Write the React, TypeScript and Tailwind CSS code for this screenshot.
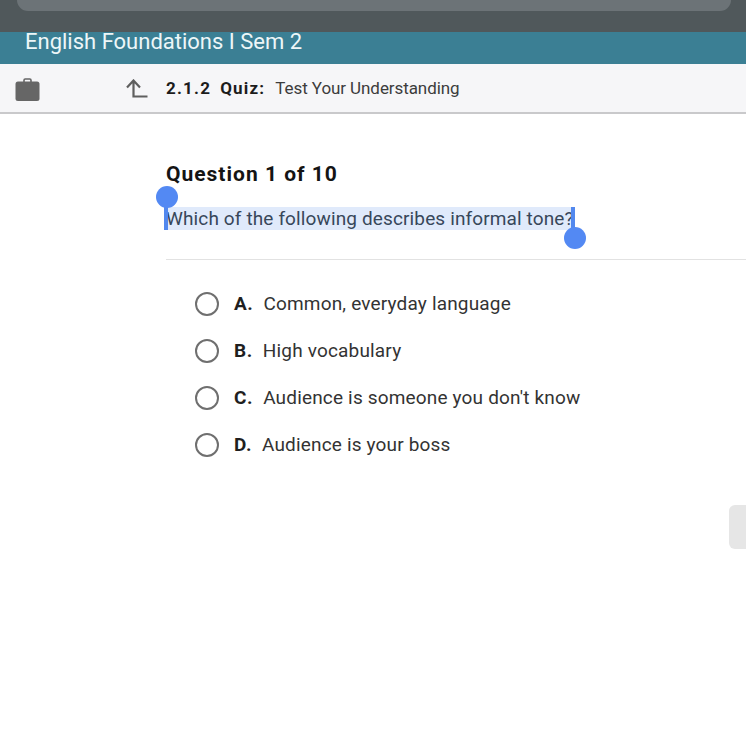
import React from "react";

const options = [
  { letter: "A.", text: "Common, everyday language" },
  { letter: "B.", text: "High vocabulary" },
  { letter: "C.", text: "Audience is someone you don't know" },
  { letter: "D.", text: "Audience is your boss" },
];

export default function App() {
  return (
    <div className="relative h-[750px] w-[746px] overflow-hidden bg-white font-['Roboto',sans-serif]">
      {/* browser chrome */}
      <div className="h-8 bg-[#50585b] pl-[17px] pr-[15px]">
        <div className="h-[11px] rounded-b-[12px] bg-[#6c7377]" />
      </div>

      <div className="flex h-8 items-start bg-[#3b7f94] pl-[25px]">
        <span className="text-[22px] leading-[20px] text-[#edf6f8]">English Foundations I Sem 2</span>
      </div>

      <div className="flex h-[50px] items-center border-b-2 border-[#c9c9cb] bg-[#f6f6f8] pl-[15px] pt-[2px]">
        <svg width="25" height="25" viewBox="0 0 25 25">
          <path d="M9 5V3.200C9 2.500 9.500 2 10.200 2h4.600C15.500 2 16 2.500 16 3.200V5" fill="none" stroke="#666" strokeWidth="1.600" />
          <rect x="0.500" y="4.500" width="24" height="19.500" rx="2.500" fill="#666" />
        </svg>
        <svg width="22" height="20" viewBox="0 0 22 20" className="ml-[86px]">
          <path d="M1 8.500L7.500 1.500L14 8.500M7.500 2V17.500H21.500" fill="none" stroke="#5f5f5f" strokeWidth="2.200" />
        </svg>
        <span className="ml-[18px] text-[17px] font-bold tracking-[1.200px] text-[#1c1c1c]">2.1.2</span>
        <span className="ml-[9px] text-[17px] font-bold tracking-[1.200px] text-[#1c1c1c]">Quiz:</span>
        <span className="ml-[10px] text-[17px] tracking-[-0.080px] text-[#3c3c3c]">Test Your Understanding</span>
      </div>

      <div className="pl-[166px] pt-[47px]">
        <div className="text-[21px] font-bold leading-[26px] tracking-[1px] text-[#141414]">Question 1 of 10</div>

        <div className="relative mt-[20px] h-[23px] w-fit">
          <span className="block bg-[#e0eafb] text-[19px] leading-[23px] tracking-[0.130px] text-[#37475a]">
            Which of the following describes informal tone?
          </span>
          <div className="absolute -left-[2px] top-0 h-[23px] w-[4px] bg-[#5288ee]" />
          <div className="absolute -left-[10px] -top-[21px] h-[22px] w-[22px] rounded-full bg-[#5389f3]" />
          <div className="absolute -right-[1px] top-0 h-[23px] w-[4px] bg-[#5288ee]" />
          <div className="absolute -right-[12px] top-[20px] h-[22px] w-[22px] rounded-full bg-[#5389f3]" />
        </div>

        <div className="mt-[29px] h-[1px] bg-[#e2e2e2]" />

        <div className="mt-[32px] flex flex-col gap-[23px] pl-[29px]">
          {options.map((o) => (
            <div key={o.letter} className="flex h-6 items-center">
              <div className="h-6 w-6 rounded-full border-[2.500px] border-[#6f6f6f]" />
              <span className="ml-[15px] text-[19px] font-bold tracking-[0.600px] text-[#1f1f1f]">{o.letter}</span>
              <span className="ml-[10px] text-[19px] tracking-[0.170px] text-[#333]">{o.text}</span>
            </div>
          ))}
        </div>
      </div>

      {/* side tab */}
      <div className="absolute left-[729px] top-[505px] h-[44px] w-[30px] rounded-[6px] bg-[#e6e6e6]" />
    </div>
  );
}
